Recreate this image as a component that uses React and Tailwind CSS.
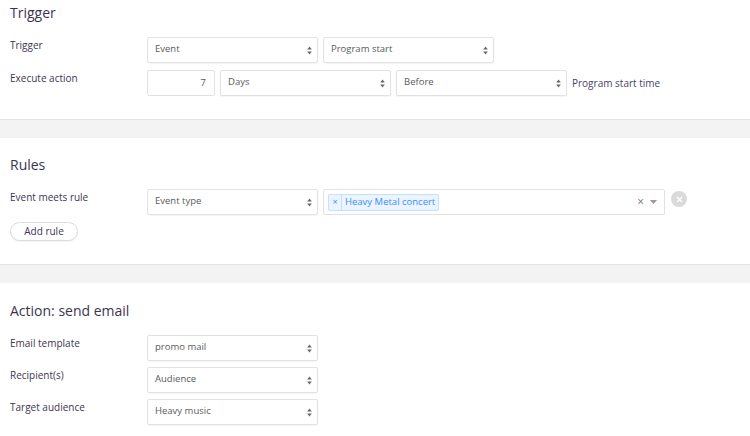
import React from "react";

const Arrows = () => (
  <svg width="5" height="9" viewBox="0 0 5 9" className="shrink-0">
    <path d="M2.5 0.5 L4.8 3.6 L0.2 3.6 Z" fill="#666" />
    <path d="M2.5 8.5 L4.8 5.4 L0.2 5.4 Z" fill="#666" />
  </svg>
);

const Select = ({ value, className = "" }) => (
  <div
    className={`h-[26px] flex items-center justify-between pl-[7px] pr-[5px] bg-white border border-[#e2e2e2] rounded-[2px] shadow-[0_1px_1px_rgba(0,0,0,0.04)] ${className}`}
  >
    <span className="text-[9.5px] text-[#5a5a5a] -mt-[2px]">{value}</span>
    <Arrows />
  </div>
);

const Label = ({ children }) => (
  <div className="w-[137px] shrink-0 pt-[1px] text-[10px] text-[#3d3553]">{children}</div>
);

const Heading = ({ children }) => (
  <h2 className="text-[14px] leading-[22px] text-[#3b3450]">{children}</h2>
);

export default function App() {
  return (
    <div className="w-[750px] h-[436px] overflow-hidden bg-[#f3f3f3] font-['Open_Sans',sans-serif]">
      {/* Trigger */}
      <section className="h-[120px] bg-white border-b border-[#e4e4e4] pl-[10px] pt-[2px]">
        <Heading>Trigger</Heading>
        <div className="mt-[13px] flex flex-col gap-[7px]">
          <div className="flex">
            <Label>Trigger</Label>
            <Select value="Event" className="w-[171px]" />
            <Select value="Program start" className="w-[171px] ml-[5px]" />
          </div>
          <div className="flex items-start">
            <Label>Execute action</Label>
            <div className="w-[68px] h-[26px] flex items-center justify-end pr-[8px] border border-[#e2e2e2] rounded-[2px] text-[9.5px] text-[#5a5a5a]">
              7
            </div>
            <Select value="Days" className="w-[171px] ml-[5px]" />
            <Select value="Before" className="w-[171px] ml-[5px]" />
            <span className="ml-[5px] h-[26px] flex items-center text-[10px] text-[#4a3f6b]">
              Program start time
            </span>
          </div>
        </div>
      </section>

      {/* Rules */}
      <section className="mt-[18px] h-[127px] bg-white border-b border-[#e4e4e4] pl-[10px] pt-[16px]">
        <Heading>Rules</Heading>
        <div className="mt-[13px] flex items-start">
          <Label>Event meets rule</Label>
          <Select value="Event type" className="w-[171px]" />
          <div className="ml-[5px] w-[342px] h-[26px] flex items-center pl-[4px] pr-[7px] border border-[#e2e2e2] rounded-[2px]">
            <div className="h-[17px] flex items-stretch border border-[#c2e0ff] bg-[#ebf5ff] rounded-[2px] text-[#3b8cff]">
              <span className="w-[13px] flex items-center justify-center border-r border-[#c2e0ff] text-[9px]">×</span>
              <span className="px-[3px] flex items-center text-[9.5px]">Heavy Metal concert</span>
            </div>
            <div className="flex-1" />
            <span className="text-[12px] text-[#777] leading-none">×</span>
            <svg width="7" height="4" viewBox="0 0 7 4" className="ml-[6px]">
              <path d="M0 0 L7 0 L3.5 4 Z" fill="#999" />
            </svg>
          </div>
          <div className="ml-[6px] mt-[2px] w-[16px] h-[16px] rounded-full bg-[#dadada] flex items-center justify-center">
            <svg width="7" height="7" viewBox="0 0 7 7">
              <path d="M1 1 L6 6 M6 1 L1 6" stroke="#fff" strokeWidth="1.4" />
            </svg>
          </div>
        </div>
        <button className="mt-[7px] w-[68px] h-[19px] rounded-full border border-[#dcdcdc] bg-white text-[10px] text-[#3d3553] shadow-[0_1px_1px_rgba(0,0,0,0.05)]">
          Add rule
        </button>
      </section>

      {/* Action */}
      <section className="mt-[18px] h-[160px] bg-white pl-[10px] pt-[17px]">
        <Heading>Action: send email</Heading>
        <div className="mt-[13px] flex flex-col gap-[6px]">
          <div className="flex">
            <Label>Email template</Label>
            <Select value="promo mail" className="w-[171px]" />
          </div>
          <div className="flex">
            <Label>Recipient(s)</Label>
            <Select value="Audience" className="w-[171px]" />
          </div>
          <div className="flex">
            <Label>Target audience</Label>
            <Select value="Heavy music" className="w-[171px]" />
          </div>
        </div>
      </section>
    </div>
  );
}
